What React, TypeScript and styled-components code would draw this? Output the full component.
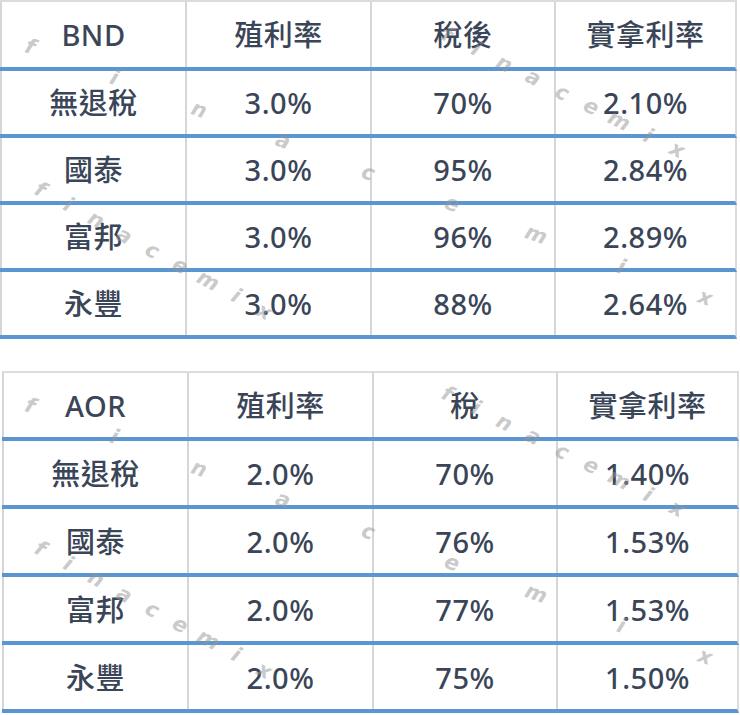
import React from "react";
import styled, { createGlobalStyle } from "styled-components";

const Global = createGlobalStyle`
  html, body { margin: 0; padding: 0; background: #ffffff; }
  body { font-family: "Noto Sans", "Noto Sans CJK TC", sans-serif; }
`;

const Page = styled.div`
  width: 740px;
  height: 715px;
  overflow: hidden;
  background: #fff;
`;

const Table = styled.div<{ $x: number; $top: number }>`
  position: relative;
  width: 737px;
  margin-left: ${(p) => p.$x}px;
  margin-top: ${(p) => p.$top}px;
  border-top: 2px solid #dcdcdc;
  box-sizing: border-box;
`;

const Row = styled.div<{ $h: number }>`
  display: grid;
  grid-template-columns: 185px 185px 184px 1fr;
  height: ${(p) => p.$h}px;
  box-sizing: border-box;
  border-right: 2px solid #dcdcdc;
  border-bottom: 4px solid #5b96d0;
`;

const Cell = styled.div`
  display: flex;
  align-items: center;
  justify-content: center;
  border-left: 2px solid #d6d6d6;
  color: #3a4558;
  font-family: "Noto Sans", "Noto Sans CJK TC", sans-serif;
  font-weight: 500;
  font-size: 29px;
  line-height: 1;
  letter-spacing: 0.5px;
`;

const Mark = styled.span<{ $rot: number }>`
  position: absolute;
  color: rgba(150, 150, 150, 0.5);
  font-family: "DejaVu Sans", sans-serif;
  font-style: oblique;
  font-weight: bold;
  font-size: 21px;
  line-height: 1;
  transform: translate(-50%, -50%) rotate(${(p) => p.$rot}deg);
  pointer-events: none;
`;

const word = "finacemix".split("");

const tracks: [number, number, number, number][] = [
  // startX, startY, stepX, stepY
  [30, 47, 84.4, 31.4],
  [40, 190, 28, 15.2],
  [447, 35, 28.7, 14.4],
];

function Watermark({ dx, dy }: { dx: number; dy: number }) {
  const letters: { ch: string; x: number; y: number; r: number }[] = [];
  tracks.forEach(([sx, sy, stx, sty]) => {
    const r = (Math.atan2(sty, stx) * 180) / Math.PI;
    word.forEach((ch, i) => {
      letters.push({ ch, x: sx + stx * i + dx, y: sy + sty * i + dy, r });
    });
  });
  return (
    <>
      {letters.map((l, i) => (
        <Mark key={i} $rot={Math.round(l.r)} style={{ left: l.x, top: l.y }}>
          {l.ch}
        </Mark>
      ))}
    </>
  );
}

type Data = { head: string[]; rows: string[][] };

const bnd: Data = {
  head: ["BND", "殖利率", "稅後", "實拿利率"],
  rows: [
    ["無退稅", "3.0%", "70%", "2.10%"],
    ["國泰", "3.0%", "95%", "2.84%"],
    ["富邦", "3.0%", "96%", "2.89%"],
    ["永豐", "3.0%", "88%", "2.64%"],
  ],
};

const aor: Data = {
  head: ["AOR", "殖利率", "稅", "實拿利率"],
  rows: [
    ["無退稅", "2.0%", "70%", "1.40%"],
    ["國泰", "2.0%", "76%", "1.53%"],
    ["富邦", "2.0%", "77%", "1.53%"],
    ["永豐", "2.0%", "75%", "1.50%"],
  ],
};

function DataTable({
  data,
  x,
  top,
  headH,
  rowH,
  dx,
  dy,
}: {
  data: Data;
  x: number;
  top: number;
  headH: number;
  rowH: number;
  dx: number;
  dy: number;
}) {
  return (
    <Table $x={x} $top={top}>
      <Row $h={headH}>
        {data.head.map((h, i) => (
          <Cell key={i}>{h}</Cell>
        ))}
      </Row>
      {data.rows.map((r, ri) => (
        <Row key={ri} $h={rowH}>
          {r.map((c, ci) => (
            <Cell key={ci}>{c}</Cell>
          ))}
        </Row>
      ))}
      <Watermark dx={dx} dy={dy} />
    </Table>
  );
}

export default function App() {
  return (
    <Page>
      <Global />
      <DataTable data={bnd} x={0} top={0} headH={69} rowH={67} dx={0} dy={-2} />
      <DataTable data={aor} x={2} top={32} headH={68} rowH={68} dx={-2} dy={-14} />
    </Page>
  );
}
